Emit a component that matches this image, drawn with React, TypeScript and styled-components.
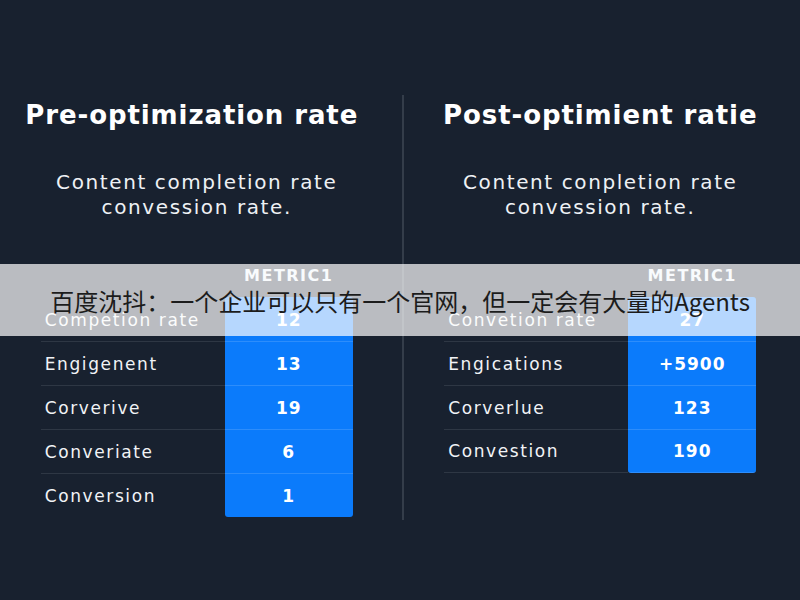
import React from "react";
import styled, { createGlobalStyle } from "styled-components";

const GlobalStyle = createGlobalStyle`
  html, body { margin: 0; padding: 0; background: #18212f; }
  #root { width: 800px; height: 600px; }
`;

const Page = styled.div`
  position: relative;
  width: 800px;
  height: 600px;
  display: flex;
  background: #18212f;
  font-family: "DejaVu Sans", Verdana, sans-serif;
  color: #f2f4f7;
  overflow: hidden;
`;

const Panel = styled.section<{ $shift: number }>`
  flex: 1;
  display: flex;
  flex-direction: column;
  align-items: center;
  padding-top: 100px;
  padding-left: ${(p) => Math.max(0, p.$shift)}px;
  padding-right: ${(p) => Math.max(0, -p.$shift)}px;
`;

const Divider = styled.div`
  width: 2px;
  margin-top: 95px;
  height: 425px;
  background: #343d4a;
`;

const Title = styled.h1<{ $nudge: number }>`
  margin: 0;
  margin-right: ${(p) => p.$nudge}px;
  font-size: 26px;
  line-height: 30px;
  font-weight: 700;
  letter-spacing: 0.9px;
  white-space: nowrap;
  color: #ffffff;
`;

const Subtitle = styled.p`
  margin: 40px 0 0;
  font-size: 20px;
  line-height: 25px;
  letter-spacing: 1.6px;
  text-align: center;
  color: #eef1f5;
`;

const Table = styled.div`
  margin-top: 33px;
  width: 312px;
  display: grid;
  grid-template-columns: 184px 128px;
`;

const HeadBlank = styled.div`
  height: 44px;
`;

const HeadCell = styled.div`
  height: 44px;
  display: flex;
  align-items: center;
  justify-content: center;
  font-size: 16px;
  font-weight: 700;
  letter-spacing: 1.5px;
  color: #eaf0f7;
`;

const Label = styled.div<{ $first: boolean; $bottom: boolean }>`
  height: 44px;
  box-sizing: border-box;
  display: flex;
  align-items: center;
  padding-left: 4px;
  font-size: 17px;
  letter-spacing: 1.6px;
  color: #f1f3f6;
  white-space: nowrap;
  border-top: 1px solid ${(p) => (p.$first ? "transparent" : "#2e3744")};
  border-bottom: ${(p) => (p.$bottom ? "1px solid #2e3744" : "none")};
`;

const Value = styled.div<{ $first: boolean; $last: boolean; $bottom: boolean }>`
  height: 44px;
  box-sizing: border-box;
  display: flex;
  align-items: center;
  justify-content: center;
  background: #0b7bfb;
  font-size: 17px;
  font-weight: 700;
  letter-spacing: 1px;
  color: #ffffff;
  border-top: 1px solid ${(p) => (p.$first ? "transparent" : "rgba(255,255,255,0.14)")};
  border-bottom: ${(p) => (p.$bottom ? "1px solid rgba(255,255,255,0.14)" : "none")};
  border-radius: ${(p) => (p.$first ? "3px 3px 0 0" : p.$last ? "0 0 3px 3px" : "0")};
`;

const Banner = styled.div`
  position: absolute;
  left: 0;
  right: 0;
  top: 264px;
  height: 72px;
  display: flex;
  align-items: center;
  justify-content: center;
  background: rgba(255, 255, 255, 0.7);
  font-family: "Noto Sans CJK SC", "Noto Sans", sans-serif;
  font-size: 24px;
  color: #1c1c1c;
  white-space: nowrap;
`;

type Row = { label: string; value: string };

const left: Row[] = [
  { label: "Competion rate", value: "12" },
  { label: "Engigenent", value: "13" },
  { label: "Corverive", value: "19" },
  { label: "Converiate", value: "6" },
  { label: "Conversion", value: "1" },
];

const right: Row[] = [
  { label: "Convetion rate", value: "27" },
  { label: "Engications", value: "+5900" },
  { label: "Corverlue", value: "123" },
  { label: "Convestion", value: "190" },
];

function MetricTable({ rows, bottomLine }: { rows: Row[]; bottomLine: boolean }) {
  return (
    <Table>
      <HeadBlank />
      <HeadCell>METRIC1</HeadCell>
      {rows.map((r, i) => {
        const first = i === 0;
        const last = i === rows.length - 1;
        const bottom = last && bottomLine;
        return (
          <React.Fragment key={r.label}>
            <Label $first={first} $bottom={bottom}>{r.label}</Label>
            <Value $first={first} $last={last} $bottom={bottom}>{r.value}</Value>
          </React.Fragment>
        );
      })}
    </Table>
  );
}

export default function App() {
  return (
    <>
      <GlobalStyle />
      <Page>
        <Panel $shift={-8}>
          <Title $nudge={10}>Pre-optimization rate</Title>
          <Subtitle>
            Content completion rate
            <br />
            convession rate.
          </Subtitle>
          <MetricTable rows={left} bottomLine={false} />
        </Panel>
        <Divider />
        <Panel $shift={-3}>
          <Title $nudge={0}>Post-optimient ratie</Title>
          <Subtitle>
            Content conpletion rate
            <br />
            convession rate.
          </Subtitle>
          <MetricTable rows={right} bottomLine={true} />
        </Panel>
        <Banner>百度沈抖：一个企业可以只有一个官网，但一定会有大量的Agents</Banner>
      </Page>
    </>
  );
}
